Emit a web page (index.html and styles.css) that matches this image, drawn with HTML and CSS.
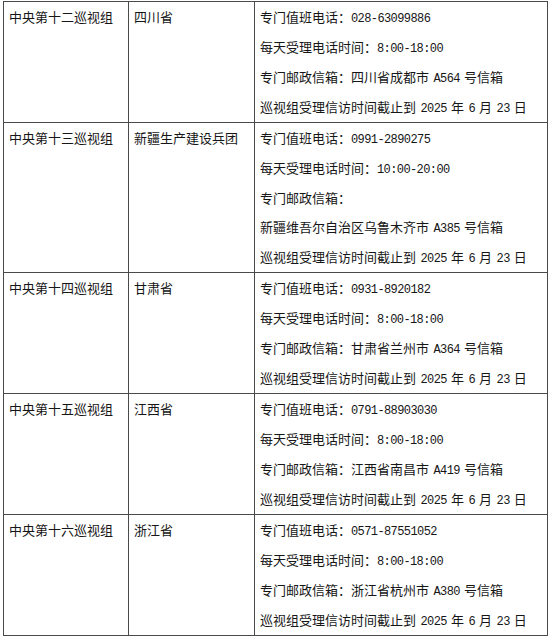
FILE: index.html
```html
<!DOCTYPE html>
<html lang="zh-CN">
<head>
<meta charset="utf-8">
<link rel="stylesheet" href="styles.css">
</head>
<body>
<table class="grid">
  <colgroup><col class="c1"><col class="c2"><col class="c3"></colgroup>
  <tr>
    <td>中央第十二巡视组</td>
    <td>四川省</td>
    <td>专门值班电话：<span class="n">028-63099886</span><br>每天受理电话时间：<span class="n">8:00-18:00</span><br>专门邮政信箱：四川省成都市<span class="n g">A564</span>号信箱<br>巡视组受理信访时间截止到<span class="n g">2025</span>年<span class="n g">6</span>月<span class="n g">23</span>日</td>
  </tr>
  <tr class="five">
    <td>中央第十三巡视组</td>
    <td>新疆生产建设兵团</td>
    <td>专门值班电话：<span class="n">0991-2890275</span><br>每天受理电话时间：<span class="n">10:00-20:00</span><br>专门邮政信箱：<br>新疆维吾尔自治区乌鲁木齐市<span class="n g">A385</span>号信箱<br>巡视组受理信访时间截止到<span class="n g">2025</span>年<span class="n g">6</span>月<span class="n g">23</span>日</td>
  </tr>
  <tr>
    <td>中央第十四巡视组</td>
    <td>甘肃省</td>
    <td>专门值班电话：<span class="n">0931-8920182</span><br>每天受理电话时间：<span class="n">8:00-18:00</span><br>专门邮政信箱：甘肃省兰州市<span class="n g">A364</span>号信箱<br>巡视组受理信访时间截止到<span class="n g">2025</span>年<span class="n g">6</span>月<span class="n g">23</span>日</td>
  </tr>
  <tr class="short">
    <td>中央第十五巡视组</td>
    <td>江西省</td>
    <td>专门值班电话：<span class="n">0791-88903030</span><br>每天受理电话时间：<span class="n">8:00-18:00</span><br>专门邮政信箱：江西省南昌市<span class="n g">A419</span>号信箱<br>巡视组受理信访时间截止到<span class="n g">2025</span>年<span class="n g">6</span>月<span class="n g">23</span>日</td>
  </tr>
  <tr>
    <td>中央第十六巡视组</td>
    <td>浙江省</td>
    <td>专门值班电话：<span class="n">0571-87551052</span><br>每天受理电话时间：<span class="n">8:00-18:00</span><br>专门邮政信箱：浙江省杭州市<span class="n g">A380</span>号信箱<br>巡视组受理信访时间截止到<span class="n g">2025</span>年<span class="n g">6</span>月<span class="n g">23</span>日</td>
  </tr>
</table>
</body>
</html>
```
FILE: styles.css
```css
html, body {
  margin: 0;
  padding: 0;
  background: #ffffff;
}
body {
  font-family: "Noto Sans CJK SC", "Noto Sans", sans-serif;
  font-size: 13px;
  color: #161616;
}
.grid {
  margin: 1px 0 0 3px;
  width: 544px;
  border-collapse: collapse;
  table-layout: fixed;
}
.c1 { width: 125px; }
.c2 { width: 126px; }
.c3 { width: 293px; }
.grid td {
  border: 1px solid #4a4a4a;
  vertical-align: top;
  padding: 0 0 0 5px;
  line-height: 30px;
  height: 120px;
  white-space: nowrap;
}
.grid tr.five td {
  line-height: 29.8px;
  height: 149px;
}
.grid tr.short td {
  height: 119px;
}
.n {
  font-family: "Liberation Mono", monospace;
  font-size: 12px;
  letter-spacing: -0.6px;
  line-height: 1;
}
.g {
  margin: 0 4px 0 4.5px;
}
```
